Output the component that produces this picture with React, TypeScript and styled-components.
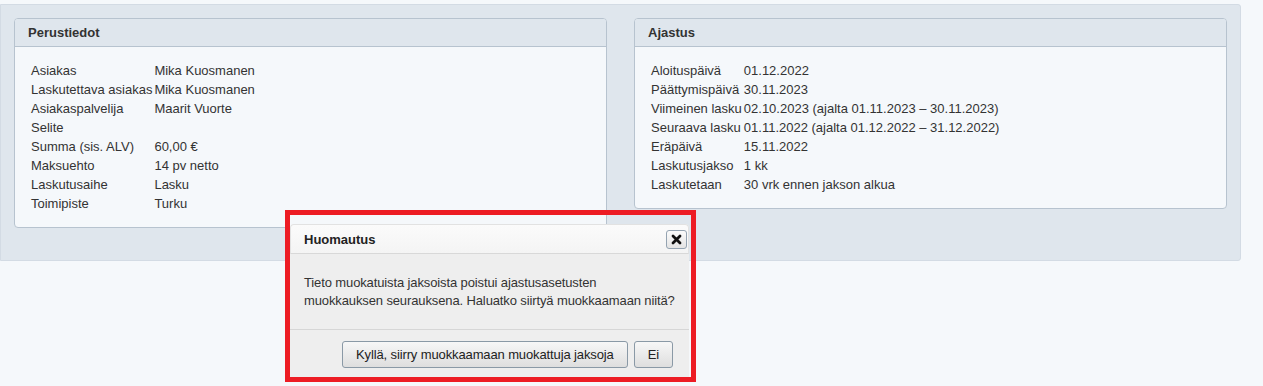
import styled, { createGlobalStyle } from 'styled-components';

const GlobalStyle = createGlobalStyle`
  body {
    margin: 0;
    background: #f5f8fb;
    font-family: 'Liberation Sans', Arial, sans-serif;
    font-size: 13px;
    color: #333;
  }
`;

const basicInfo: [string, string][] = [
  ['Asiakas', 'Mika Kuosmanen'],
  ['Laskutettava asiakas', 'Mika Kuosmanen'],
  ['Asiakaspalvelija', 'Maarit Vuorte'],
  ['Selite', ''],
  ['Summa (sis. ALV)', '60,00 €'],
  ['Maksuehto', '14 pv netto'],
  ['Laskutusaihe', 'Lasku'],
  ['Toimipiste', 'Turku'],
];

const schedule: [string, string][] = [
  ['Aloituspäivä', '01.12.2022'],
  ['Päättymispäivä', '30.11.2023'],
  ['Viimeinen lasku', '02.10.2023 (ajalta 01.11.2023 – 30.11.2023)'],
  ['Seuraava lasku', '01.11.2022 (ajalta 01.12.2022 – 31.12.2022)'],
  ['Eräpäivä', '15.11.2022'],
  ['Laskutusjakso', '1 kk'],
  ['Laskutetaan', '30 vrk ennen jakson alkua'],
];

function InfoPanel({ title, rows }: { title: string; rows: [string, string][] }) {
  return (
    <Panel>
      <PanelHeader>{title}</PanelHeader>
      <PanelBody>
        {rows.map(([label, value]) => (
          <Row key={label}>
            <Label>{label}</Label>
            <Value>{value}</Value>
          </Row>
        ))}
      </PanelBody>
    </Panel>
  );
}

export default function App() {
  return (
    <>
      <GlobalStyle />
      <Page>
        <Container>
          <InfoPanel title="Perustiedot" rows={basicInfo} />
          <InfoPanel title="Ajastus" rows={schedule} />
        </Container>

        <Dialog>
          <DialogHeader>
            <DialogTitle>Huomautus</DialogTitle>
            <CloseButton aria-label="Sulje">
              <svg width="11" height="11" viewBox="0 0 11 11">
                <path
                  d="M2 2 L9 9 M9 2 L2 9"
                  stroke="#111"
                  strokeWidth="2.8"
                  strokeLinecap="round"
                />
              </svg>
            </CloseButton>
          </DialogHeader>
          <DialogBody>
            Tieto muokatuista jaksoista poistui ajastusasetusten
            <br />
            muokkauksen seurauksena. Haluatko siirtyä muokkaamaan niitä?
          </DialogBody>
          <DialogFooter>
            <Button>Kyllä, siirry muokkaamaan muokattuja jaksoja</Button>
            <Button>Ei</Button>
          </DialogFooter>
        </Dialog>

        <Highlight />
      </Page>
    </>
  );
}

const Page = styled.div`
  position: relative;
  padding: 4px 22px 0 0;
  min-height: 382px;
`;

const Container = styled.div`
  display: grid;
  grid-template-columns: 1fr 1fr;
  column-gap: 27px;
  align-items: start;
  padding: 13px 13px 32px 13px;
  background: #dfe6ed;
  border: 1px solid #d3dbe4;
  border-radius: 0 3px 3px 0;
`;

const Panel = styled.section`
  background: #f5f8fb;
  border: 1px solid #b7c3cf;
  border-radius: 4px;
  overflow: hidden;
`;

const PanelHeader = styled.h2`
  margin: 0;
  height: 27px;
  line-height: 27px;
  padding-left: 13px;
  font-size: 13px;
  font-weight: bold;
  color: #333;
  background: #dfe6ed;
  border-bottom: 1px solid #b7c3cf;
`;

const PanelBody = styled.div`
  display: grid;
  grid-template-columns: max-content 1fr;
  column-gap: 2px;
  padding: 14px 16px;
  line-height: 19px;
`;

const Row = styled.div`
  display: contents;
`;

const Label = styled.span`
  color: #333;
  white-space: nowrap;
`;

const Value = styled.span`
  color: #333;
  min-height: 19px;
  white-space: nowrap;
`;

const Dialog = styled.div`
  position: absolute;
  left: 290px;
  top: 224px;
  width: 399px;
  background: #eeeeee;
  border-top-left-radius: 4px;
  border-top-right-radius: 4px;
  overflow: hidden;
`;

const DialogHeader = styled.div`
  display: flex;
  align-items: center;
  justify-content: space-between;
  height: 28px;
  padding: 0 1px 0 13px;
  background: linear-gradient(#fbfbfb, #f4f4f4);
  border: 1px solid #e2e2e2;
  border-bottom-color: #d8d8d8;
  border-radius: 4px 4px 0 0;
`;

const DialogTitle = styled.span`
  font-weight: bold;
  font-size: 13px;
  color: #222;
`;

const CloseButton = styled.button`
  display: flex;
  align-items: center;
  justify-content: center;
  width: 21px;
  height: 19px;
  margin-top: 1px;
  padding: 0;
  border: 1px solid #94a3b1;
  border-radius: 3px;
  background: linear-gradient(#fbfbfb, #e4e4e4);
`;

const DialogBody = styled.p`
  margin: 0;
  padding: 20px 14px 19px;
  line-height: 18px;
  font-size: 13px;
  letter-spacing: -0.12px;
  white-space: nowrap;
  color: #333;
  border-bottom: 1px solid #d6d6d6;
`;

const DialogFooter = styled.div`
  display: flex;
  justify-content: flex-end;
  gap: 6px;
  padding: 11px 16px 12px;
`;

const Button = styled.button`
  height: 27px;
  padding: 0 13px;
  font-family: 'Liberation Sans', Arial, sans-serif;
  font-size: 13px;
  letter-spacing: -0.12px;
  white-space: nowrap;
  color: #222;
  background: linear-gradient(#f7f7f7, #dedede);
  border: 1px solid #8a99a6;
  border-radius: 3px;
`;

const Highlight = styled.div`
  position: absolute;
  left: 285px;
  top: 210px;
  width: 411px;
  height: 172px;
  box-sizing: border-box;
  border: 5px solid #ed1c24;
  pointer-events: none;
`;
